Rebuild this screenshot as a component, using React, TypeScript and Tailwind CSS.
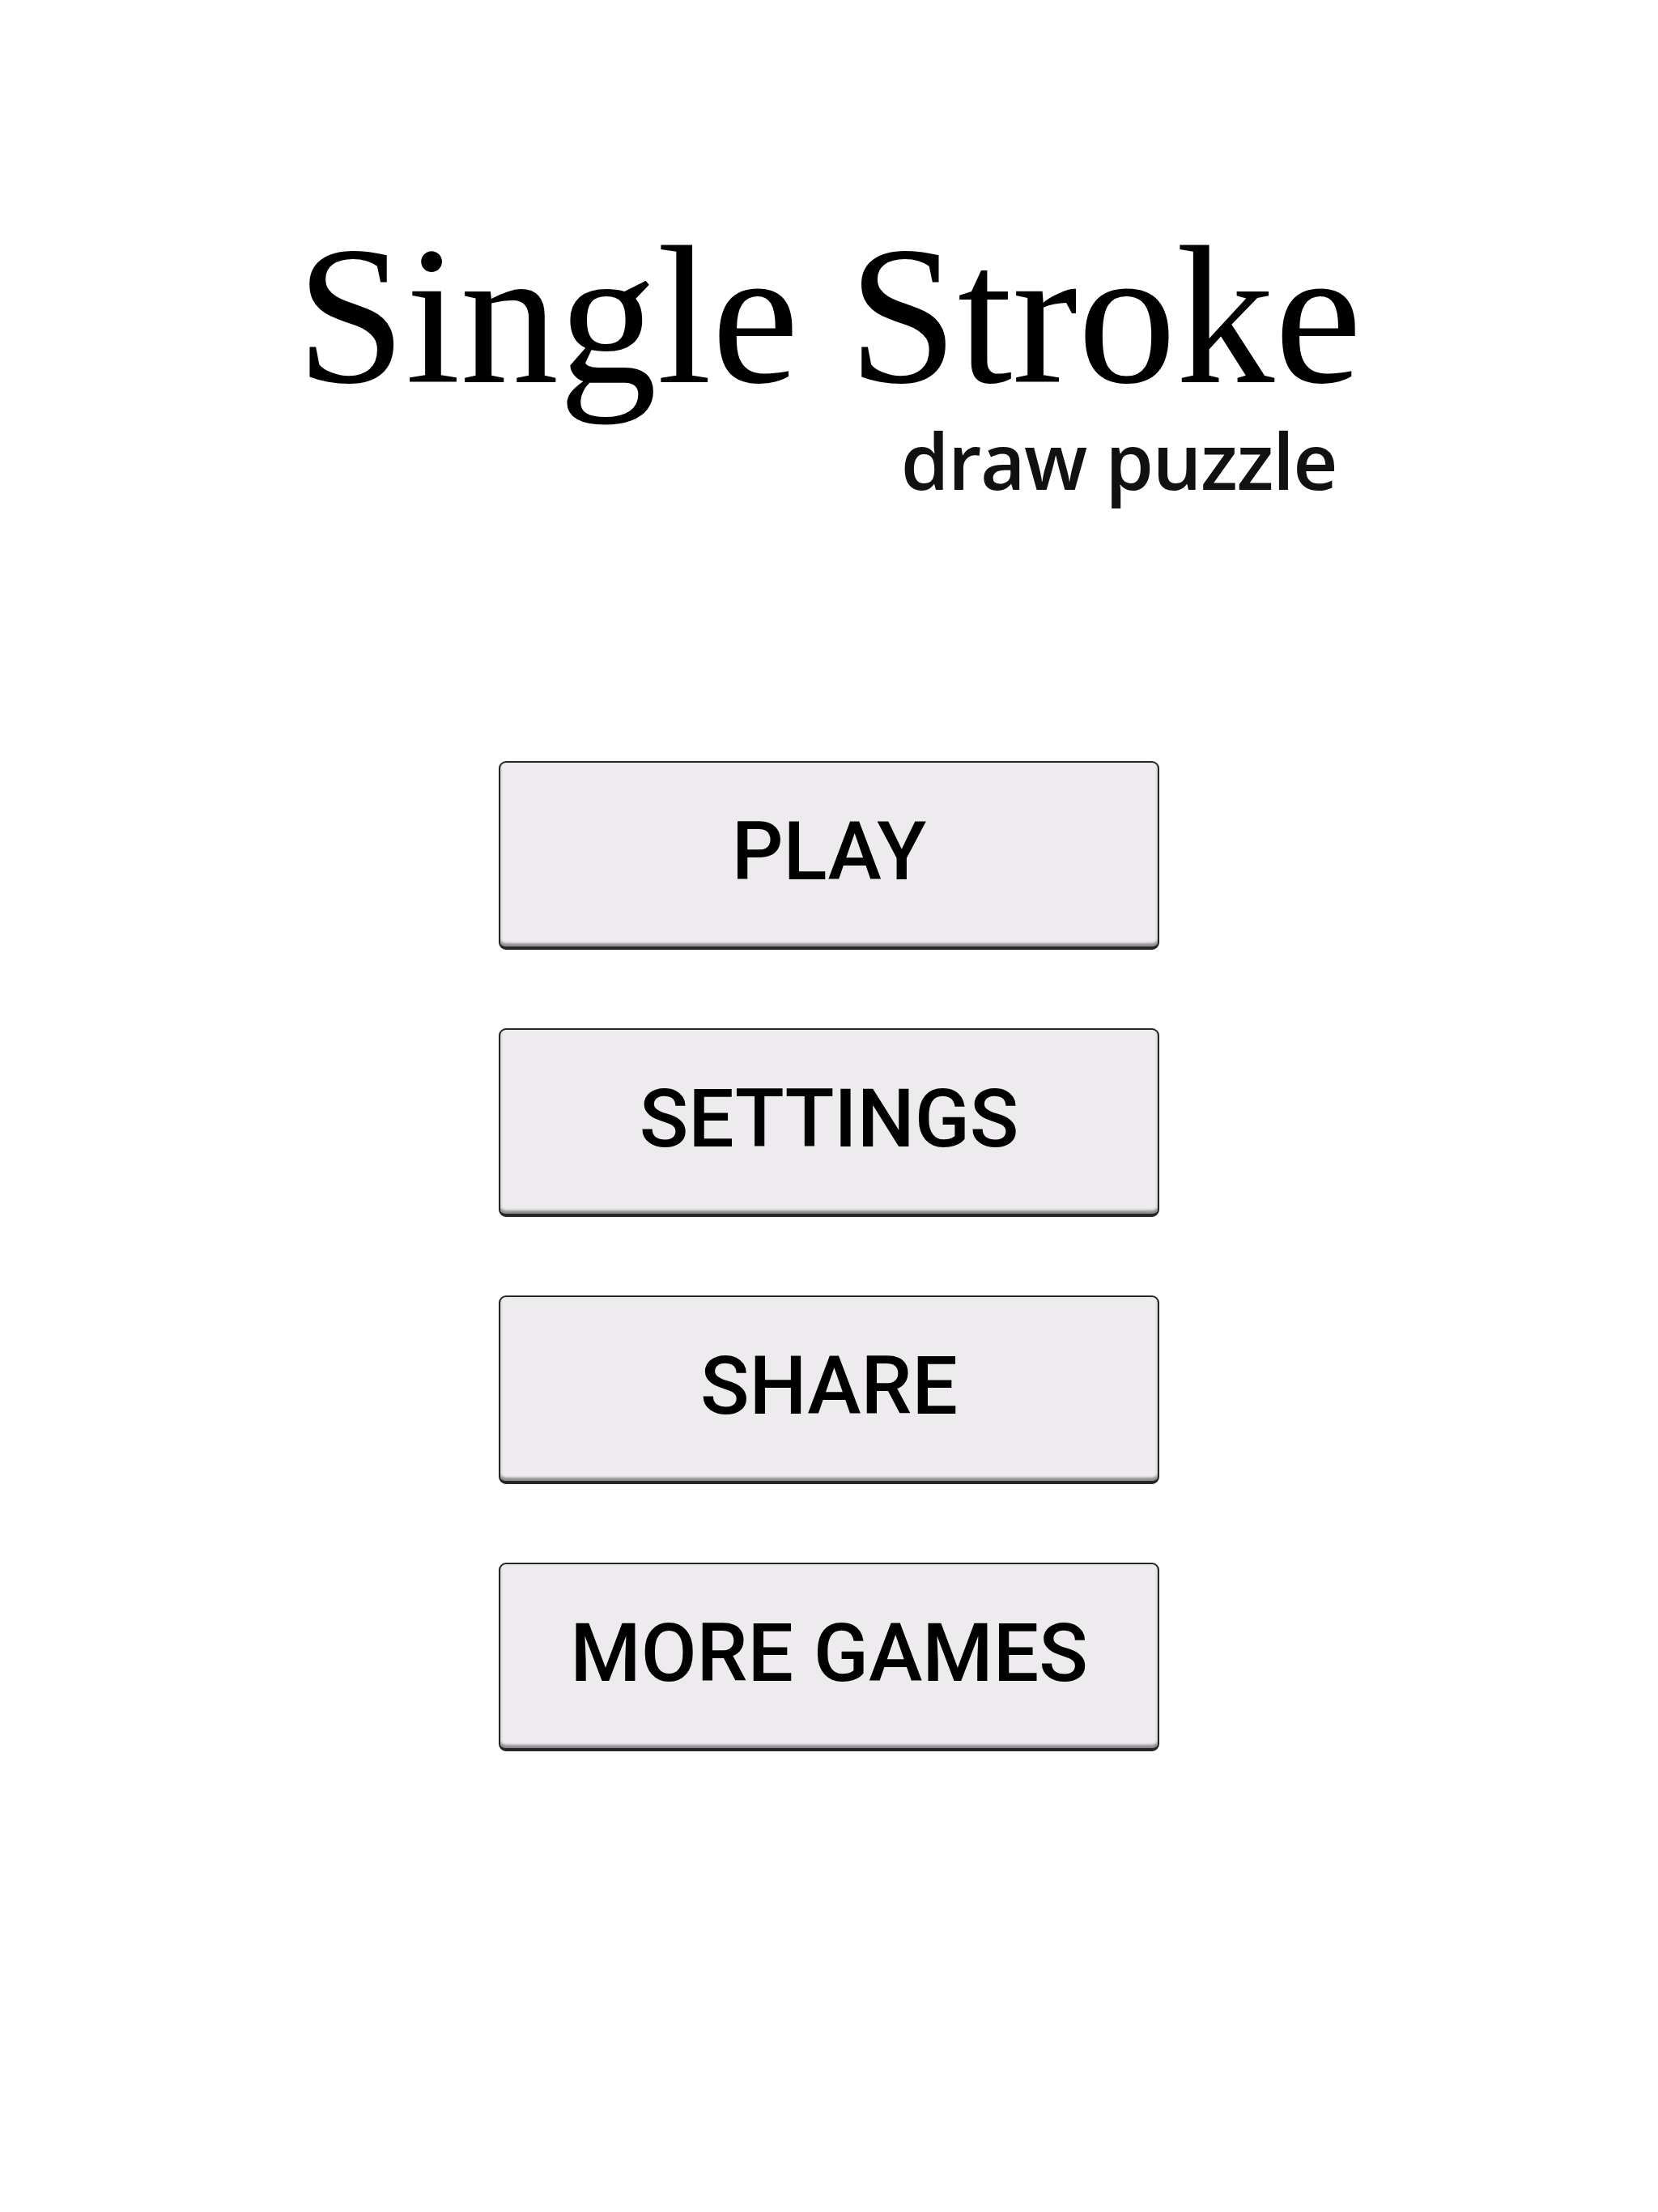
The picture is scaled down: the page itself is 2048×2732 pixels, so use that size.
const buttons = ["PLAY", "SETTINGS", "SHARE", "MORE GAMES"];

export default function App() {
  return (
    <div className="min-h-[2732px] w-full bg-white flex flex-col items-center">
      {/* Title block */}
      <div className="mt-[290px] w-[1330px] flex flex-col">
        <h1 className="text-center whitespace-nowrap text-[243px] leading-[200px] text-black font-normal font-['Liberation_Serif',serif]">
          Single Stroke
        </h1>
        <div className="mt-[30px] flex justify-end pr-[38px]">
          <span className="whitespace-nowrap text-[96px] leading-none font-semibold text-[#111] tracking-[-1.5px] font-['Open_Sans',sans-serif]">
            draw puzzle
          </span>
        </div>
      </div>

      {/* Menu buttons */}
      <div className="mt-[324px] flex flex-col gap-[97px]">
        {buttons.map((label) => (
          <button
            key={label}
            type="button"
            className="w-[816px] h-[233px] rounded-[9px] border-2 border-b-[4px] border-[#262626] bg-[#eeebee] shadow-[inset_0_-4px_3px_#8f8d8f] flex items-center justify-center pb-[8px]"
          >
            <span className="text-[100px] leading-none font-medium text-black font-['Roboto',sans-serif]">
              {label}
            </span>
          </button>
        ))}
      </div>
    </div>
  );
}
